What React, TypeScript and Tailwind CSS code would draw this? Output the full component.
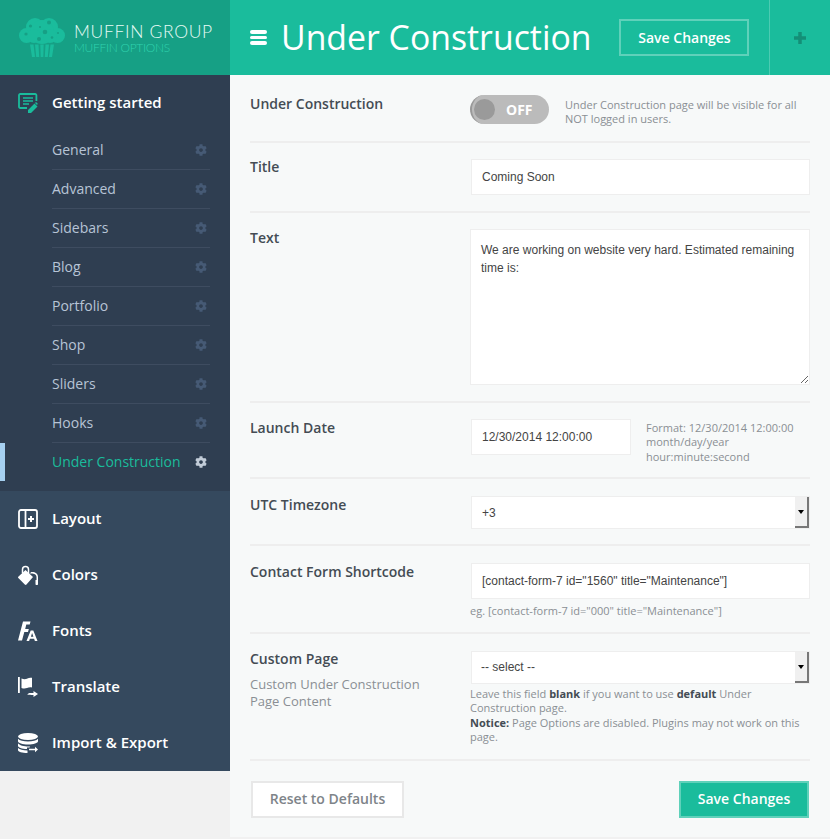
import React, { ReactNode } from 'react';
import { FaCog } from 'react-icons/fa';

const subItems = ['General', 'Advanced', 'Sidebars', 'Blog', 'Portfolio', 'Shop', 'Sliders', 'Hooks'];

// Muffin logo
const MuffinLogo = () => (
  <svg width="46" height="39" viewBox="0 0 46 39" className="flex-none text-[#1abc9c]" fill="currentColor">
    <circle cx="7.500" cy="17.500" r="7.500" />
    <circle cx="38.500" cy="17.500" r="7.500" />
    <circle cx="16" cy="9" r="9" />
    <circle cx="30" cy="9" r="9" />
    <circle cx="23" cy="14" r="12" />
    <circle cx="15" cy="18" r="7" />
    <circle cx="31" cy="18" r="7" />
    <path d="M11 26.500h3.500l1.500 12.500h-3z M16 26.500h3.500l.7 12.500h-3z M21.300 26.500h3.400l-.4 12.500h-2.600z M26.500 26.500h3.500l-1.200 12.500h-3z M31.500 26.500h3.500l-2 12.500h-3z" />
    <g fill="#16a085">
      <circle cx="11.500" cy="8" r="1.600" />
      <circle cx="30" cy="4.500" r="2" />
      <circle cx="7" cy="16" r="1.600" />
      <circle cx="26" cy="14" r="2.300" />
      <circle cx="20" cy="21" r="2" />
      <circle cx="33" cy="19.500" r="1.300" />
      <circle cx="39" cy="15" r="1" />
      <circle cx="21" cy="9" r="1" />
    </g>
  </svg>
);

const NoteIcon = () => (
  <svg width="20" height="20" viewBox="0 0 20 20" fill="none">
    <path d="M9 15H2.200A1.200 1.200 0 0 1 1 13.800V2.200A1.200 1.200 0 0 1 2.200 1h15A1.200 1.200 0 0 1 18.400 2.200V8" stroke="#1abc9c" strokeWidth="1.800" />
    <path d="M5 5h10M5 8h10M5 11h6" stroke="#1abc9c" strokeWidth="1.700" />
    <path d="M10 17l6.500-6.500 3 3L13 20h-3z M17 10l1-1 1.800 1.800 -.800 1.200z" fill="#1abc9c" />
  </svg>
);

const LayoutIcon = () => (
  <svg width="20" height="20" viewBox="0 0 20 20" fill="none">
    <rect x="1" y="1" width="18" height="18" rx="2" stroke="white" strokeWidth="1.800" />
    <path d="M7.500 1v18" stroke="white" strokeWidth="1.800" />
    <path d="M10 10h6M13 7v6" stroke="white" strokeWidth="2" />
  </svg>
);

const BucketIcon = () => (
  <svg width="20" height="20" viewBox="0 0 20 20" fill="white">
    <path d="M0.500 11.500L7.500 5l7.500 7-6.500 7.500a1.200 1.200 0 0 1-1.700.1L.6 13.300a1.200 1.200 0 0 1-.1-1.800z" />
    <path d="M4.500 8V4.500a3 3 0 0 1 6 0v4.500" stroke="white" strokeWidth="1.500" fill="none" />
    <path d="M12 8.500c3-.5 6.500.5 6.500 3.500v4.500a1 1 0 0 0 1.500 0V12c0-4-3.500-5.500-7-5z" />
    <path d="M17.500 15h2.500v4a1.200 1.200 0 0 1-2.500 0z" />
  </svg>
);

const FontsIcon = () => (
  <svg width="20" height="20" viewBox="0 0 20 20" fill="white">
    <path d="M0 19.500L5 .500h7.500l-.8 3H8.300L7.200 8h3.600l-.8 3H6.300L4 19.500z" />
    <path d="M8.500 20l4.200-10.500h2.600L19.500 20h-2.600l-.8-2.300h-4.200L11.100 20zm4.400-4.300h2.500L14.100 12z" />
  </svg>
);

const TranslateIcon = () => (
  <svg width="20" height="20" viewBox="0 0 20 20" fill="white">
    <rect x="0" y="0" width="1.800" height="16" />
    <path d="M3.500 1.500c2 .8 4 .8 5.500.2S12.500.5 14 .8v9.700c-2-.5-3.500 0-5 .6s-3.500.8-5.500-.1z" />
    <path d="M9.500 18c0-1.500 1.500-2 3-2h3v-2l4.500 3-4.500 3v-2h-2c-1.500 0-3-.5-4 0z" />
  </svg>
);

const DatabaseIcon = () => (
  <svg width="20" height="20" viewBox="0 0 20 20" fill="white">
    <ellipse cx="10" cy="3.500" rx="10" ry="3.500" />
    <path d="M0 5.800v2.400C0 10 4.500 11.500 10 11.500s10-1.500 10-3.300V5.800C18.500 7.600 14.500 8.500 10 8.500S1.500 7.600 0 5.800z" />
    <path d="M0 10.300v2.400c0 1.800 4 3.200 9 3.300v-1.500h2.500l.5-1C6.500 13.700 1.500 12.500 0 10.300z" />
    <path d="M0 15v2c0 1.800 4 3 9.500 3v-2.500C5 17.500 1.500 16.500 0 15z" />
    <path d="M11 15.800h6V13.800l3 2.700-3 2.700v-1.900h-6z" />
  </svg>
);

const MainItem = ({ icon, label }: { icon: ReactNode; label: string }) => (
  <div className="h-14 flex items-center pl-[18px] text-white font-semibold text-[15px]">
    <span className="w-[34px] flex-none flex items-center">{icon}</span>
    <span className="pb-[2px]">{label}</span>
  </div>
);

const Sidebar = () => (
  <aside className="w-[230px] flex-none bg-[#f1f1f1]">
    <div className="h-[75px] bg-[#16a085] flex items-center pl-[19px]">
      <MuffinLogo />
      <div className="ml-[9px] mt-[1px] font-['Lato',sans-serif] font-light whitespace-nowrap">
        <div className="text-[17.500px] leading-[19px] tracking-[0.037em] text-[#e8fbf6]">MUFFIN GROUP</div>
        <div className="text-[12px] leading-[13px] tracking-[-0.025em] text-[#2fd2ae]">MUFFIN OPTIONS</div>
      </div>
    </div>
    <div className="bg-[#2f3e51] h-[416px] relative">
      <div className="absolute left-0 top-[368px] w-[5px] h-[38px] bg-[#a6d0f0]" />
      <div className="h-[56px] flex items-center pl-[18px] text-white font-semibold text-[15px]">
        <span className="w-[34px] flex-none flex items-center mt-[-1px]"><NoteIcon /></span>
        <span className="pb-[2px]">Getting started</span>
      </div>
      <ul className="ml-[52px] w-[158px]">
        {subItems.map(item => (
          <li key={item} className="h-[39px] border-b border-[#3e4c60] flex items-center justify-between pr-[3px] text-[14px] text-[#b7c4d6]">
            <span className="pb-[2px]">{item}</span>
            <FaCog className="text-[#465a75] text-[12px]" />
          </li>
        ))}
        <li className="h-[38px] flex items-center justify-between pr-[3px] text-[14px] text-[#1abc9c]">
          <span className="pb-[2px]">Under Construction</span>
          <FaCog className="text-[#c2ccd8] text-[12px]" />
        </li>
      </ul>
    </div>
    <div className="bg-[#35495e]">
      <MainItem icon={<LayoutIcon />} label="Layout" />
      <MainItem icon={<BucketIcon />} label="Colors" />
      <MainItem icon={<FontsIcon />} label="Fonts" />
      <MainItem icon={<TranslateIcon />} label="Translate" />
      <MainItem icon={<DatabaseIcon />} label="Import & Export" />
    </div>
  </aside>
);

const Header = () => (
  <header className="h-[75px] bg-[#1abc9c] flex items-center pl-5 text-white">
    <div className="w-[17px] flex flex-col gap-[2px] mr-[14px]">
      <span className="h-[3.500px] rounded-sm bg-white" />
      <span className="h-[3.500px] rounded-sm bg-white" />
      <span className="h-[3.500px] rounded-sm bg-white" />
    </div>
    <h1 className="text-[33.800px] leading-none font-normal whitespace-nowrap">Under Construction</h1>
    <button className="ml-[28px] w-[130px] h-[37px] border-2 border-[#5fd1ba] text-[14px] font-semibold">Save Changes</button>
    <div className="ml-auto w-[61px] h-full border-l border-[#4ccbb2] flex items-center justify-center">
      <svg width="14" height="14" viewBox="0 0 14 14"><path d="M7 1v12M1 7h12" stroke="#148f77" strokeWidth="3.500" /></svg>
    </div>
  </header>
);

const Row = ({ label, sub, className, children }: { label: string; sub?: string; className: string; children: ReactNode }) => (
  <div className={`flex border-b-2 border-[#eeeeee] ${className}`}>
    <div className="w-[220px] flex-none pr-6">
      <div className="text-[14px] font-semibold text-[#444c54] leading-5">{label}</div>
      {sub && <div className="mt-[7px] text-[13px] leading-[17px] text-[#8a8f94]">{sub}</div>}
    </div>
    <div className="flex-1 min-w-0">{children}</div>
  </div>
);

const inputBox = "bg-white border border-[#eeeeee] font-['Liberation_Sans',sans-serif] text-[12px] text-[#444444] outline-none";

const FakeSelect = ({ value, className, textClass }: { value: string; className: string; textClass?: string }) => (
  <div className={`${inputBox} ml-[1px] h-[33px] flex items-center justify-between pl-[10px] ${className}`}>
    <span className={textClass}>{value}</span>
    <span className="w-[14px] h-[31px] bg-[#f0f0f0] border-r-2 border-b-2 border-[#777777] flex items-center justify-center">
      <span className="w-0 h-0 border-l-[3px] border-r-[3px] border-t-[4px] border-l-transparent border-r-transparent border-t-black" />
    </span>
  </div>
);

const hint = 'text-[11px] leading-[14.300px] text-[#8a8f94]';

export default function App() {
  return (
    <div className="flex w-[830px] min-h-[839px] bg-[#f1f1f1] font-['Open_Sans',sans-serif]">
      <Sidebar />
      <main className="flex-1 min-w-0 h-[837px] bg-[#f7f9f9]">
        <Header />
        <div className="px-5">
          <Row label="Under Construction" className="h-[68px] pt-[19px]">
            <div className="flex">
              <div className="w-[79px] h-[29px] mt-[1px] flex-none rounded-full bg-[#bbbbbb] border-l-2 border-[#999999] flex items-center pl-[2px]">
                <span className="w-[21px] h-[21px] rounded-full bg-[#9a9a9a]" />
                <span className="ml-[11px] text-[14px] font-bold text-white">OFF</span>
              </div>
              <p className={`${hint} ml-[16px] mt-[4px] w-[240px]`}>Under Construction page will be visible for all NOT logged in users.</p>
            </div>
          </Row>
          <Row label="Title" className="h-[70px] pt-[14px]">
            <input readOnly value="Coming Soon" className={`${inputBox} block ml-[1px] w-[339px] h-[36px] px-[10px] mt-[2px]`} />
          </Row>
          <Row label="Text" className="h-[190px] pt-[15px]">
            <textarea
              readOnly
              value="We are working on website very hard. Estimated remaining time is:"
              className={`${inputBox} block w-[340px] h-[156px] mt-[1px] px-[10px] py-[11px] leading-[18px] resize`}
            />
          </Row>
          <Row label="Launch Date" className="h-[76px] pt-[15px]">
            <div className="flex mt-[1px]">
              <input readOnly value="12/30/2014 12:00:00" className={`${inputBox} ml-[1px] w-[160px] h-[36px] px-[10px] flex-none`} />
              <p className={`${hint} ml-[15px] mt-[2px]`}>Format: 12/30/2014 12:00:00<br />month/day/year<br />hour:minute:second</p>
            </div>
          </Row>
          <Row label="UTC Timezone" className="h-[67px] pt-[16px]">
            <FakeSelect value="+3" className="mt-[1px]" />
          </Row>
          <Row label="Contact Form Shortcode" className="h-[88px] pt-[16px]">
            <input readOnly value={'[contact-form-7 id="1560" title="Maintenance"]'} className={`${inputBox} block ml-[1px] mt-[1px] w-[339px] h-[36px] px-[10px]`} />
            <p className={`${hint} mt-[5px]`}>eg. [contact-form-7 id="000" title="Maintenance"]</p>
          </Row>
          <Row label="Custom Page" sub="Custom Under Construction Page Content" className="h-[127px] pt-[15px]">
            <FakeSelect value="-- select --" className="mt-[2px]" textClass="pb-[2px] -ml-[1px]" />
            <p className={`${hint} mt-[3px]`}>
              Leave this field <b className="text-[#444c54]">blank</b> if you want to use <b className="text-[#444c54]">default</b> Under Construction page.<br />
              <b className="text-[#444c54]">Notice:</b> Page Options are disabled. Plugins may not work on this page.
            </p>
          </Row>
          <div className="flex items-center justify-between pt-[20px] px-[1px]">
            <button className="w-[153px] h-[37px] pb-[2px] border-2 border-[#e8e8e8] bg-white text-[14px] font-semibold text-[#7e8489]">Reset to Defaults</button>
            <button className="w-[130px] h-[37px] pb-[2px] border-2 border-[#5fd1ba] bg-[#1abc9c] text-[14px] font-semibold text-white">Save Changes</button>
          </div>
        </div>
      </main>
    </div>
  );
}
